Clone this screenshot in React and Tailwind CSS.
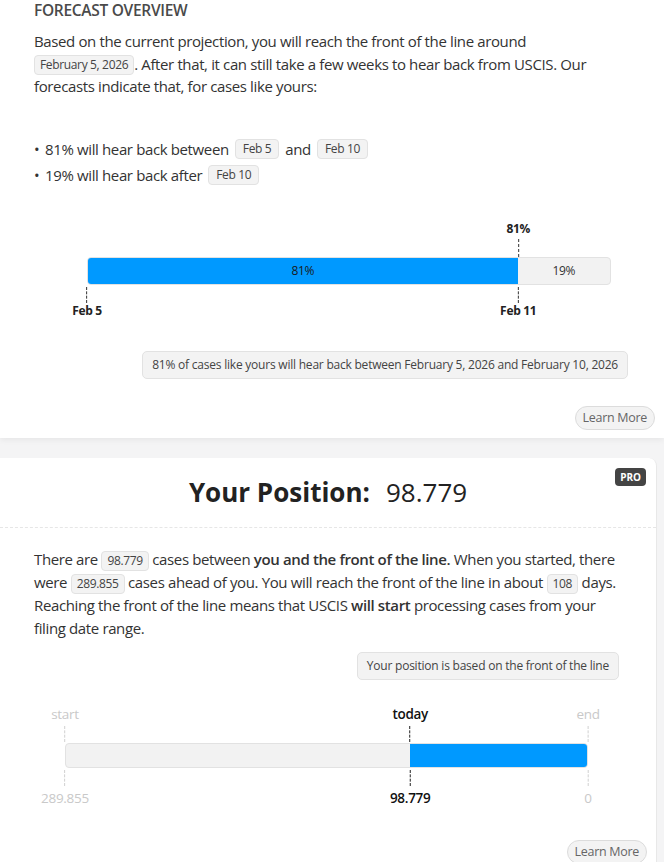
import React from 'react'

const font = { fontFamily: '"Open Sans", "Noto Sans", sans-serif' }

function Chip({ children, className = '' }) {
  return (
    <span className={`inline-block rounded-[4px] border border-[#e2e2e2] bg-[#f3f3f3] px-[5px] py-[1px] align-middle text-[12px] leading-[16px] tracking-[-0.35px] text-[#444] ${className}`}>
      {children}
    </span>
  )
}

function Pill({ children }) {
  return (
    <span className="inline-block rounded-full border border-[#dcdcdc] bg-[#f3f3f3] px-[7px] py-[3px] text-[12.5px] leading-[16px] tracking-[-0.3px] text-[#666]">
      {children}
    </span>
  )
}

function Tick({ className = '' }) {
  return <div className={`h-[16px] w-0 border-l-[1.5px] border-dashed ${className}`} />
}

function ForecastBar() {
  const pct = 82.3
  return (
    <div className="relative ml-[53px] mr-[44px] h-[120px]">
      {/* 81% marker above the bar */}
      <div className="absolute top-[12px] flex -translate-x-1/2 flex-col items-center" style={{ left: `${pct}%` }}>
        <span className="text-[12px] font-bold leading-[14px] tracking-[-0.3px] text-[#222]">81%</span>
        <Tick className="mt-[3px] h-[18px] border-[#333]" />
      </div>
      <div className="absolute left-0 right-0 top-[47px] flex h-[28px] overflow-hidden rounded-[4px] border border-[#e2e2e2] bg-[#f2f2f2]">
        <div className="flex items-center justify-center bg-[#0099ff] text-[12px] tracking-[-0.3px] text-[#1a1a1a]" style={{ width: `${pct}%` }}>
          81%
        </div>
        <div className="flex flex-1 items-center justify-center text-[12px] tracking-[-0.3px] text-[#333]">19%</div>
      </div>
      <div className="absolute left-0 top-[77px] flex -translate-x-1/2 flex-col items-center">
        <Tick className="border-[#333]" />
        <span className="mt-[1px] text-[12px] font-bold leading-[14px] tracking-[-0.3px] text-[#222]">Feb 5</span>
      </div>
      <div className="absolute top-[77px] flex -translate-x-1/2 flex-col items-center" style={{ left: `${pct}%` }}>
        <Tick className="border-[#333]" />
        <span className="mt-[1px] text-[12px] font-bold leading-[14px] tracking-[-0.3px] text-[#222]">Feb 11</span>
      </div>
    </div>
  )
}

function PositionBar() {
  const pct = 66
  return (
    <div className="relative ml-[65px] mr-[68px] h-[112px]">
      <div className="absolute left-0 top-0 flex -translate-x-1/2 flex-col items-center">
        <span className="text-[13.5px] leading-[16px] tracking-[-0.3px] text-[#c9c9c9]">start</span>
        <Tick className="mt-[4px] h-[14px] border-[#d0d0d0]" />
      </div>
      <div className="absolute top-0 flex -translate-x-1/2 flex-col items-center" style={{ left: `${pct}%` }}>
        <span className="text-[13.5px] font-semibold leading-[16px] tracking-[-0.3px] text-[#111]">today</span>
        <Tick className="mt-[4px] h-[14px] border-[#222]" />
      </div>
      <div className="absolute right-0 top-0 flex translate-x-1/2 flex-col items-center">
        <span className="text-[13.5px] leading-[16px] tracking-[-0.3px] text-[#c9c9c9]">end</span>
        <Tick className="mt-[4px] h-[14px] border-[#d0d0d0]" />
      </div>
      <div className="absolute left-0 right-0 top-[37px] flex h-[25px] overflow-hidden rounded-[4px] border border-[#e2e2e2] bg-[#f2f2f2]">
        <div style={{ width: `${pct}%` }} />
        <div className="flex-1 bg-[#0099ff]" />
      </div>
      <div className="absolute left-0 top-[64px] flex -translate-x-1/2 flex-col items-center">
        <Tick className="h-[14px] border-[#d0d0d0]" />
        <span className="mt-[4px] text-[13.5px] leading-[16px] tracking-[-0.3px] text-[#c9c9c9]">289.855</span>
      </div>
      <div className="absolute top-[64px] flex -translate-x-1/2 flex-col items-center" style={{ left: `${pct}%` }}>
        <Tick className="h-[14px] border-[#222]" />
        <span className="mt-[4px] text-[13.5px] font-semibold leading-[16px] tracking-[-0.3px] text-[#111]">98.779</span>
      </div>
      <div className="absolute right-0 top-[64px] flex translate-x-1/2 flex-col items-center">
        <Tick className="h-[14px] border-[#d0d0d0]" />
        <span className="mt-[4px] text-[13.5px] leading-[16px] tracking-[-0.3px] text-[#c9c9c9]">0</span>
      </div>
    </div>
  )
}

export default function App() {
  return (
    <div className="min-h-[862px] w-[664px] overflow-hidden bg-[#f4f4f5]" style={font}>
      {/* forecast card */}
      <div className="bg-white pb-[8px] pl-[34px] pr-[9px] shadow-[0_2px_6px_rgba(0,0,0,0.06)]">
        <h2 className="pt-[1px] text-[15.5px] font-semibold uppercase leading-[18px] tracking-[-0.3px] text-[#4a4a4a]">Forecast Overview</h2>
        <p className="mt-[11px] w-[585px] text-[15px] leading-[22.5px] tracking-[-0.37px] text-[#333]">
          Based on the current projection, you will reach the front of the line around <Chip>February 5, 2026</Chip>. After that, it can still take a few weeks to hear back from USCIS. Our forecasts indicate that, for cases like yours:
        </p>
        <ul className="mt-[40px] space-y-[4px] text-[15px] leading-[22px] tracking-[-0.37px] text-[#333]">
          <li className="flex items-center">
            <span className="mr-[5px] w-[6px] text-[15px] leading-[22px]">•</span>
            81% will hear back between <Chip className="mx-[6px] px-[7px] text-[12.5px]">Feb 5</Chip> and <Chip className="ml-[6px] px-[7px] text-[12.5px]">Feb 10</Chip>
          </li>
          <li className="flex items-center">
            <span className="mr-[5px] w-[6px] text-[15px] leading-[22px]">•</span>
            19% will hear back after <Chip className="ml-[6px] px-[7px] text-[12.5px]">Feb 10</Chip>
          </li>
        </ul>
        <div className="mt-[24px]">
          <ForecastBar />
        </div>
        <div className="mt-[21px] flex justify-end pr-[27px]">
          <span className="rounded-[5px] border border-[#e2e2e2] bg-[#f3f3f3] px-[9px] py-[5px] text-[12px] leading-[16px] tracking-[-0.22px] text-[#444]">
            81% of cases like yours will hear back between February 5, 2026 and February 10, 2026
          </span>
        </div>
        <div className="mt-[27px] flex justify-end">
          <Pill>Learn More</Pill>
        </div>
      </div>

      {/* position card */}
      <div className="mt-[20px] w-[657px] rounded-r-[8px] border-r border-[#e8e8e8] bg-white pb-[20px]">
        <div className="relative flex h-[70px] items-center justify-center border-b border-dashed border-[#e6e6e6]">
          <h2 className="text-[26px] leading-[32px] text-[#222]">
            <span className="font-bold">Your Position:</span>
            <span className="ml-[16px]">98.779</span>
          </h2>
          <span className="absolute right-[10px] top-[10px] rounded-[4px] bg-[#444] px-[5px] py-[2px] text-[10px] font-bold leading-[14px] text-white">PRO</span>
        </div>
        <div className="pl-[34px] pr-[30px] pt-[20px]">
          <p className="text-[15px] leading-[23px] tracking-[-0.37px] text-[#333]">
            There are <Chip>98.779</Chip> cases between <b className="font-semibold">you and the front of the line.</b> When you started, there were <Chip>289.855</Chip> cases ahead of you. You will reach the front of the line in about <Chip>108</Chip> days. Reaching the front of the line means that USCIS <b className="font-semibold">will start</b> processing cases from your filing date range.
          </p>
          <div className="mt-[12px] flex justify-end pr-[7px]">
            <span className="rounded-[5px] border border-[#e2e2e2] bg-[#f3f3f3] px-[9px] py-[5px] text-[12px] leading-[16px] tracking-[-0.22px] text-[#444]">
              Your position is based on the front of the line
            </span>
          </div>
        </div>
        <div className="mt-[26px]">
          <PositionBar />
        </div>
        <div className="mt-[22px] flex justify-end pr-[9px]">
          <Pill>Learn More</Pill>
        </div>
      </div>
    </div>
  )
}
